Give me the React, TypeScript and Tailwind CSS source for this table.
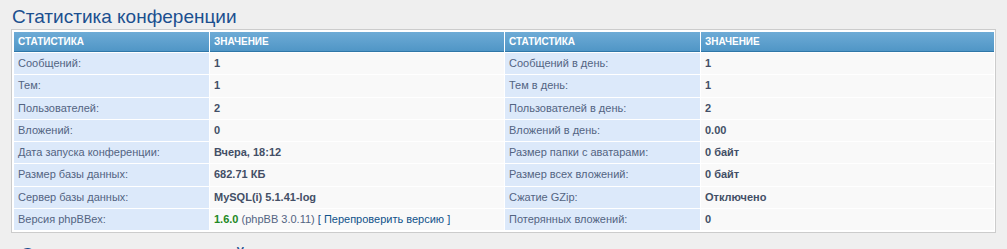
const rows: [string, React.ReactNode, string, string][] = [
  ["Сообщений:", "1", "Сообщений в день:", "1"],
  ["Тем:", "1", "Тем в день:", "1"],
  ["Пользователей:", "2", "Пользователей в день:", "2"],
  ["Вложений:", "0", "Вложений в день:", "0.00"],
  ["Дата запуска конференции:", "Вчера, 18:12", "Размер папки с аватарами:", "0 байт"],
  ["Размер базы данных:", "682.71 КБ", "Размер всех вложений:", "0 байт"],
  ["Сервер базы данных:", "MySQL(i) 5.1.41-log", "Сжатие GZip:", "Отключено"],
  [
    "Версия phpBBex:",
    <>
      <span className="text-[#228822]">1.6.0</span>{" "}
      <span className="font-normal text-[#536482]">(phpBB 3.0.11)</span>{" "}
      <span className="font-normal text-[#105289]">[ Перепроверить версию ]</span>
    </>,
    "Потерянных вложений:",
    "0",
  ],
];

const HeadCell = ({ children, w }: { children: string; w: string }) => (
  <th
    className={`${w} h-[20px] p-0 pl-[4px] text-left align-middle text-[10px] font-bold uppercase text-white bg-gradient-to-b from-[#6dabd6] to-[#5096c6] border-b border-[#2f77a8]`}
  >
    {children}
  </th>
);

const App = () => {
  return (
    <div className="min-h-screen bg-[#efefef] font-['Liberation_Sans',Arial,sans-serif]">
      <h1 className="pl-[12px] pt-[5px] mb-[1px] text-[19px] leading-[23px] font-normal text-[#1b4f8f]">
        Статистика конференции
      </h1>
      <div className="mx-[11px] border border-[#cccccc] bg-white p-[1px]">
        <table className="w-full table-fixed border-separate border-spacing-[1px]">
          <thead>
            <tr>
              <HeadCell w="w-[195px]">Статистика</HeadCell>
              <HeadCell w="w-[294px]">Значение</HeadCell>
              <HeadCell w="w-[195px]">Статистика</HeadCell>
              <HeadCell w="w-[293px]">Значение</HeadCell>
            </tr>
          </thead>
          <tbody>
            {rows.map((r, i) => (
              <tr key={i} className="h-[21.25px] text-[11px] leading-[13px]">
                <td className="p-0 pl-[4px] align-middle bg-[#dce9fa] text-[#536482]">{r[0]}</td>
                <td className="p-0 pl-[4px] align-middle bg-[#f9f9f9] font-bold text-[#434f66] whitespace-nowrap">{r[1]}</td>
                <td className="p-0 pl-[4px] align-middle bg-[#dce9fa] text-[#536482]">{r[2]}</td>
                <td className="p-0 pl-[4px] align-middle bg-[#f9f9f9] font-bold text-[#434f66]">{r[3]}</td>
              </tr>
            ))}
          </tbody>
        </table>
      </div>
      <h2 className="pl-[20px] pt-[10px] text-[19px] leading-[23px] font-normal text-[#1b4f8f]">
        Операции со статистикой
      </h2>
    </div>
  );
};

export default App;
